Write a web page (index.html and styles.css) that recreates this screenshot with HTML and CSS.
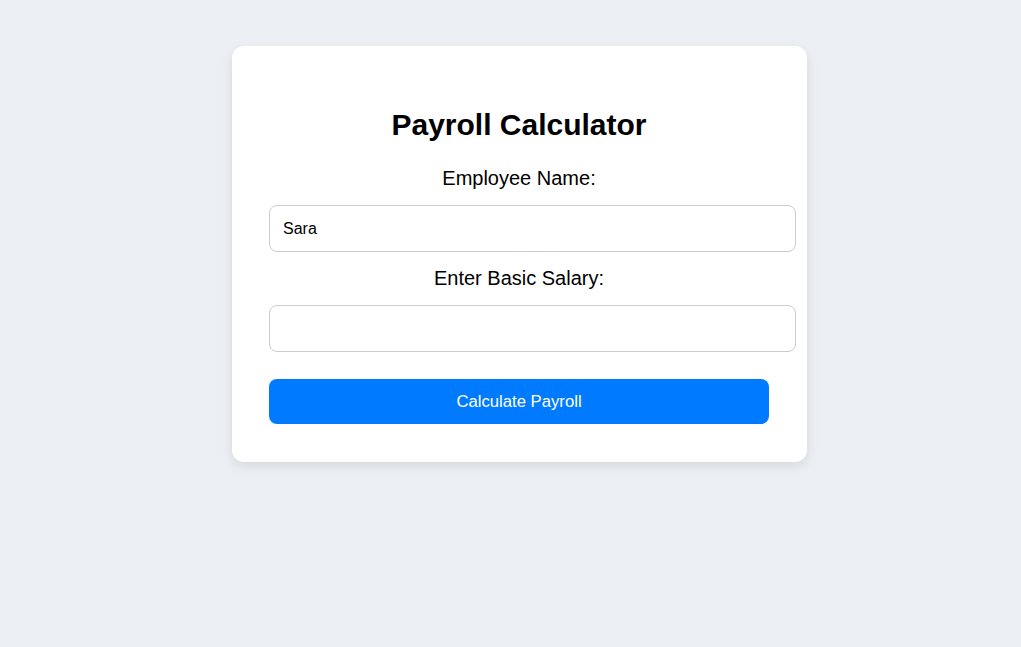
FILE: index.html
```html
<!DOCTYPE html>
<html lang="en">
<head>
<meta charset="utf-8">
<title>Payroll Calculator</title>
<link rel="stylesheet" href="styles.css">
</head>
<body>
<div class="card">
  <h2 class="title">Payroll Calculator</h2>
  <label class="label" for="name">Employee Name:</label>
  <input class="field" id="name" type="text" value="Sara">
  <label class="label" for="salary">Enter Basic Salary:</label>
  <input class="field" id="salary" type="text" value="">
  <button class="btn" type="button">Calculate Payroll</button>
</div>
</body>
</html>
```
FILE: styles.css
```css
html, body {
  margin: 0;
  padding: 0;
}
body {
  background: #ecf0f4;
  font-family: "Liberation Sans", Arial, sans-serif;
  display: flex;
  justify-content: center;
  align-items: flex-start;
  padding: 46px 0 0 18px;
  min-height: 647px;
  box-sizing: border-box;
}
.card {
  width: 500px;
  background: #ffffff;
  border-radius: 12px;
  padding: 37px 38px 38px 37px;
  box-shadow: 0 4px 12px rgba(0, 0, 0, 0.1);
  text-align: center;
}
.title {
  font-size: 30px;
  font-weight: bold;
  margin: 25px 0 25px;
  color: #000;
}
.label {
  display: block;
  font-size: 20px;
  color: #000;
  margin-bottom: 15px;
}
.field {
  display: block;
  width: 500px;
  height: 21px;
  padding: 12px 12px 12px 13px;
  margin: 0 0 15px 0;
  border: 1px solid #cccccc;
  border-radius: 8px;
  font-family: "Liberation Sans", Arial, sans-serif;
  font-size: 16px;
  color: #000;
  text-align: left;
  outline: none;
}
.btn {
  display: block;
  width: 500px;
  height: 45px;
  margin-top: 27px;
  border: none;
  border-radius: 8px;
  background: #007bff;
  color: #ffffff;
  font-family: "Liberation Sans", Arial, sans-serif;
  font-size: 16.7px;
  cursor: pointer;
}
```
